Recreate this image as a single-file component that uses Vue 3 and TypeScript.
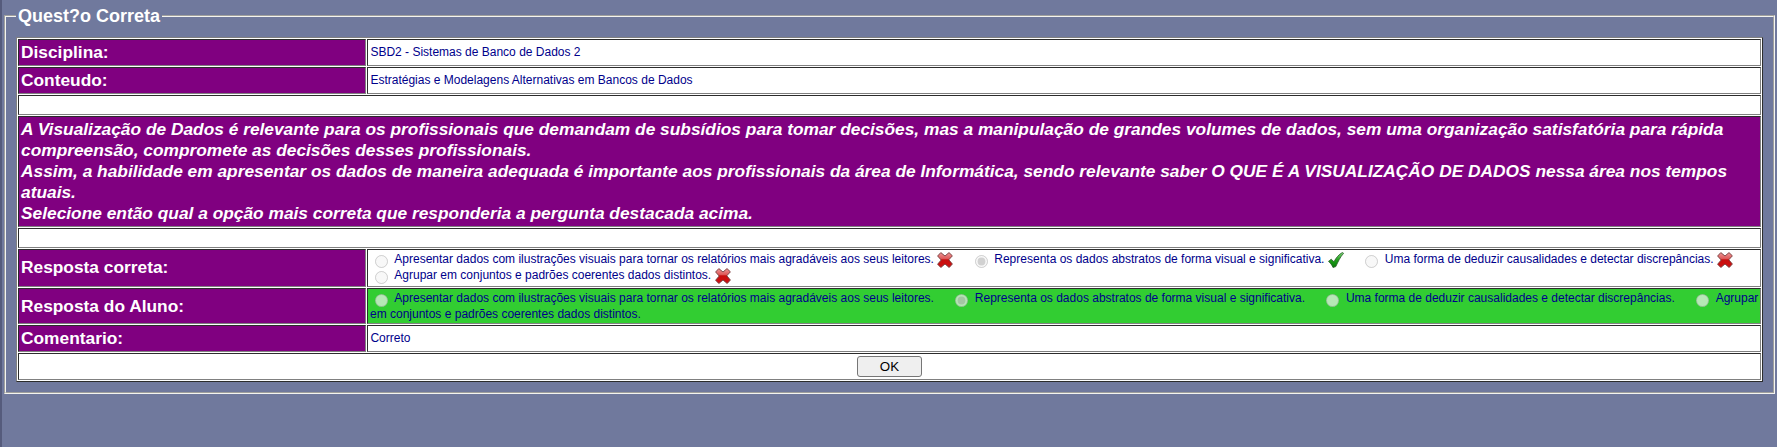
<script setup lang="ts">
interface Option { text: string; ok: boolean; checked: boolean }

const options: Option[] = [
  { text: 'Apresentar dados com ilustrações visuais para tornar os relatórios mais agradáveis aos seus leitores.', ok: false, checked: false },
  { text: 'Representa os dados abstratos de forma visual e significativa.', ok: true, checked: true },
  { text: 'Uma forma de deduzir causalidades e detectar discrepâncias.', ok: false, checked: false },
  { text: 'Agrupar em conjuntos e padrões coerentes dados distintos.', ok: false, checked: false },
]
const nb = '\u00a0'
const gap = nb.repeat(4) + ' '
</script>

<template>
  <main class="page">
    <fieldset class="box">
      <legend>Quest?o Correta</legend>
      <table class="grid">
        <colgroup><col class="c1" /><col /></colgroup>
        <tbody>
          <tr class="h27"><th>Disciplina:</th><td>SBD2 - Sistemas de Banco de Dados 2</td></tr>
          <tr class="h27"><th>Conteudo:</th><td>Estratégias e Modelagens Alternativas em Bancos de Dados</td></tr>
          <tr class="h20"><td colspan="2"></td></tr>
          <tr class="h111">
            <th colspan="2" class="question">A Visualização de Dados é relevante para os profissionais que demandam de subsídios para tomar decisões, mas a manipulação de grandes volumes de dados, sem uma organização satisfatória para rápida compreensão, compromete as decisões desses profissionais.<br />Assim, a habilidade em apresentar os dados de maneira adequada é importante aos profissionais da área de Informática, sendo relevante saber O QUE É A VISUALIZAÇÃO DE DADOS nessa área nos tempos atuais.<br />Selecione então qual a opção mais correta que responderia a pergunta destacada acima.</th>
          </tr>
          <tr class="h20"><td colspan="2"></td></tr>
          <tr class="h38">
            <th>Resposta correta:</th>
            <td class="answers">
              <template v-for="(o, i) in options" :key="i">
                <input type="radio" disabled :checked="o.checked" /><span>{{ nb + o.text + nb }}</span><svg v-if="o.ok" class="mark" viewBox="0 0 16 16">
                  <defs><linearGradient id="green" x1="0" y1="0" x2="0" y2="1"><stop offset="0" stop-color="#7fd67a" /><stop offset=".5" stop-color="#1fa01a" /><stop offset="1" stop-color="#067a06" /></linearGradient></defs>
                  <path d="M.5 9.4 3.2 7.2 6 9.8C8 5.8 10.8 2.4 14.4.5l1.2.8C12.2 5 10 9.8 7.8 14.6L5 15.5C3.8 12.8 2.6 11 .5 9.4z" fill="url(#green)" stroke="#2a5a28" stroke-width=".8" />
                </svg><svg v-else class="mark" viewBox="0 0 16 16">
                  <defs><linearGradient id="red" x1="0" y1="0" x2="0" y2="1"><stop offset="0" stop-color="#ee9a9a" /><stop offset=".42" stop-color="#dd5555" /><stop offset=".48" stop-color="#c80d0d" /><stop offset="1" stop-color="#d01010" /></linearGradient></defs>
                  <path d="M3.8.6 8 4 12 .6 15.4 3.8 11.8 7.8 15.4 12 12.2 15.5 8 12 3.8 15.5.6 12.2 4.2 8 .6 4z" fill="url(#red)" stroke="#743c3c" stroke-width=".9" />
                </svg><span>{{ gap }}</span>
              </template>
            </td>
          </tr>
          <tr class="h36">
            <th>Resposta do Aluno:</th>
            <td class="answers right">
              <template v-for="(o, i) in options" :key="i">
                <input type="radio" disabled :checked="o.checked" /><span>{{ nb + o.text + gap }}</span>
              </template>
            </td>
          </tr>
          <tr class="h27"><th>Comentario:</th><td>Correto</td></tr>
          <tr class="h27"><td colspan="2" class="action"><button type="button">OK</button></td></tr>
        </tbody>
      </table>
    </fieldset>
  </main>
</template>

<style>
html, body { background: #70799d; }
</style>
<style scoped>
.page {
  box-sizing: border-box;
  height: 447px;
  padding: 7px 2px 0 2px;
  border-left: 2px solid #555b7c;
  overflow: hidden;
  font-family: "Liberation Sans", Arial, sans-serif;
}
.box {
  box-sizing: border-box;
  width: 1771px;
  height: 387px;
  margin: 0;
  padding: 12px 10px 0 10px;
  border: 2px groove #f4f4f0;
}
legend { padding: 0 2px; font-size: 18px; line-height: 18px; font-weight: bold; color: #fff; }
.grid {
  width: 1747px;
  table-layout: fixed;
  border: 1px solid;
  border-color: #808080 #2c2c2c #2c2c2c #808080;
  border-spacing: 1px;
  background: #fff;
}
.c1 { width: 348px; }
th, td { box-sizing: border-box; padding: 2px; border: 1px solid; border-color: #2c2c2c #808080 #808080 #2c2c2c; text-align: left; }
th { background: #800080; color: #fff; font-size: 17.333px; line-height: 21px; font-weight: bold; }
th.question { font-style: italic; }
td { color: #00008b; font-size: 12px; line-height: 14px; }
.h27 { height: 27px; }
.h27 td { padding-bottom: 4px; padding-left: 2.4px; }
.h20 { height: 20px; }
.h111 { height: 111px; }
.h38 { height: 38px; }
.h38 th { padding-bottom: 3px; }
.h36 { height: 36px; }
td.answers { vertical-align: top; }
td.right { padding-right: 0; background: #32cd32; }
.answers input { width: 13px; height: 13px; margin: 3px 3px 0 5px; vertical-align: -5px; }
.right input:not(:first-child) { margin-left: 4.5px; margin-right: 3.4px; }
.mark { width: 16px; height: 16px; vertical-align: -5px; }
td.action { padding: 1px 2px !important; text-align: center; }
button { display: block; box-sizing: border-box; width: 65px; height: 21px; margin: 0 auto; padding: 0; border: 1px solid #767676; border-radius: 3px; background: #efefef; color: #000; font: 13.333px "Liberation Sans", Arial, sans-serif; }
</style>
